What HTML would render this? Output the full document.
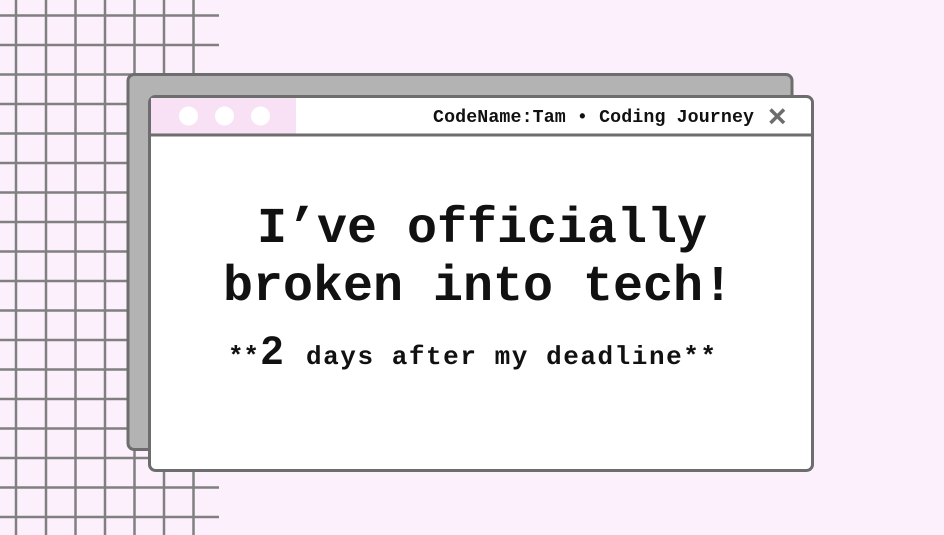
<!DOCTYPE html>
<html><head><meta charset="utf-8"><style>
html,body{margin:0;padding:0;background:#fdf0fd;}
svg{display:block}
</style></head><body>
<svg width="944" height="535" viewBox="0 0 944 535" xmlns="http://www.w3.org/2000/svg">
<rect width="944" height="535" fill="#fdf0fd"/>
<g stroke="#808080" stroke-width="2.5">
<line x1="16" y1="0" x2="16" y2="535"/><line x1="46" y1="0" x2="46" y2="535"/><line x1="75.5" y1="0" x2="75.5" y2="535"/><line x1="105" y1="0" x2="105" y2="535"/><line x1="134.5" y1="0" x2="134.5" y2="535"/><line x1="164" y1="0" x2="164" y2="535"/><line x1="193.5" y1="0" x2="193.5" y2="535"/>
<line x1="0" y1="15.5" x2="219" y2="15.5"/><line x1="0" y1="45" x2="219" y2="45"/><line x1="0" y1="74.5" x2="219" y2="74.5"/><line x1="0" y1="104" x2="219" y2="104"/><line x1="0" y1="133.5" x2="219" y2="133.5"/><line x1="0" y1="163" x2="219" y2="163"/><line x1="0" y1="192.5" x2="219" y2="192.5"/><line x1="0" y1="222" x2="219" y2="222"/><line x1="0" y1="251.5" x2="219" y2="251.5"/><line x1="0" y1="281" x2="219" y2="281"/><line x1="0" y1="310.5" x2="219" y2="310.5"/><line x1="0" y1="340" x2="219" y2="340"/><line x1="0" y1="369.5" x2="219" y2="369.5"/><line x1="0" y1="399" x2="219" y2="399"/><line x1="0" y1="428.5" x2="219" y2="428.5"/><line x1="0" y1="458" x2="219" y2="458"/><line x1="0" y1="487.5" x2="219" y2="487.5"/><line x1="0" y1="517" x2="219" y2="517"/>
</g>
<rect x="128" y="74.5" width="664" height="375" rx="6" fill="#b3b3b3" stroke="#6d6d6d" stroke-width="3"/>
<rect x="149.5" y="96.5" width="663" height="374" rx="6" fill="#fff" stroke="#6d6d6d" stroke-width="3"/>
<path d="M151 98 H296 V134 H151 Z" fill="#f8e0f5"/>
<line x1="150" y1="135" x2="812" y2="135" stroke="#6d6d6d" stroke-width="3"/>
<circle cx="188.5" cy="116" r="9.5" fill="#fff"/><circle cx="224.5" cy="116" r="9.5" fill="#fff"/><circle cx="260.5" cy="116" r="9.5" fill="#fff"/>
<text x="754" y="122" text-anchor="end" textLength="321" font-family="Liberation Mono, monospace" font-weight="bold" font-size="18.3" fill="#111">CodeName:Tam • Coding Journey</text>
<path d="M770.5 109.5 L784 123 M784 109.5 L770.5 123" stroke="#6d6d6d" stroke-width="3.5" stroke-linecap="butt"/>
<g font-family="Liberation Mono, monospace" font-weight="bold" fill="#111" text-anchor="middle">
<text x="482" y="242" font-size="50">I’ve officially</text>
<text x="478" y="300" font-size="50">broken into tech!</text>
</g>
<text y="364" font-family="Liberation Mono, monospace" font-weight="bold" font-size="26" fill="#111"><tspan x="228" textLength="31">**</tspan><tspan x="261" font-family="Liberation Sans, sans-serif" font-size="40">2</tspan><tspan x="306" textLength="410" lengthAdjust="spacing">days after my deadline**</tspan></text>
</svg>
</body></html>
